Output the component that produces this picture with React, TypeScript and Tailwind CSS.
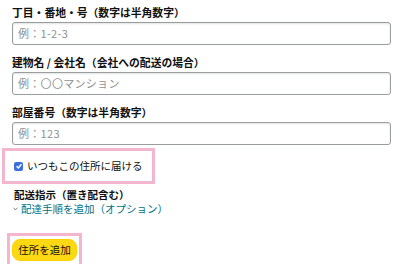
const jp = "font-['Noto_Sans_CJK_JP','Noto_Sans',sans-serif]";

const Field = ({ label, placeholder }: { label: string; placeholder: string }) => (
  <div className="mb-[9px]">
    <div className="h-[16px] leading-[16px] text-[10.8px] font-bold text-[#0f1111]">{label}</div>
    <div className="mt-[2px] h-[23px] w-[379px] rounded-[3px] border border-[#9a9d9d] bg-white shadow-[inset_0_1px_2px_rgba(15,17,17,0.12)] flex items-center px-[5px]">
      <span className="text-[11px] tracking-[0.3px] text-[#8d9191]">{placeholder}</span>
    </div>
  </div>
);

export default function App() {
  return (
    <div className={`w-[400px] h-[264px] overflow-hidden bg-white pl-[12px] pt-[4px] ${jp}`}>
      <Field label="丁目・番地・号（数字は半角数字）" placeholder="例：1-2-3" />
      <Field label="建物名 / 会社名（会社への配送の場合）" placeholder="例：〇〇マンション" />
      <Field label="部屋番号（数字は半角数字）" placeholder="例：123" />

      <div className="-ml-[10px] -mt-[6px] w-[153px] h-[36px] border-[3px] border-[#f4b6ce] flex items-center pl-[9px]">
        <span className="w-[9px] h-[9px] rounded-[2px] bg-[#3b6fe0] flex items-center justify-center">
          <svg viewBox="0 0 10 10" className="w-[8px] h-[8px]">
            <path d="M2 5.2 L4.2 7.3 L8 2.8" fill="none" stroke="white" strokeWidth="1.8" />
          </svg>
        </span>
        <span className="ml-[4px] text-[10.5px] text-[#0f1111]">いつもこの住所に届ける</span>
      </div>

      <div className="mt-[4px] pl-[2px] h-[14px] leading-[14px] text-[10.5px] font-bold text-[#0f1111]">配送指示（置き配含む）</div>
      <div className="flex items-center h-[14px] leading-[14px] text-[10.5px] text-[#007185]">
        <svg viewBox="0 0 8 6" className="w-[5px] h-[4px] mr-[3px] ml-[1px]">
          <path d="M1 1 L4 4.5 L7 1" fill="none" stroke="#565959" strokeWidth="1.2" />
        </svg>
        配達手順を追加（オプション）
      </div>

      <div className="-ml-[5px] mt-[17px] w-[75px] h-[34px] border-[3px] border-[#f4b6ce] pt-[3px] pl-[2px]">
        <div className="w-[65px] h-[22px] rounded-[8px] bg-[#ffd814] border border-[#fcd200] flex items-center justify-center text-[10.5px] text-[#0f1111]">
          住所を追加
        </div>
      </div>
    </div>
  );
}
